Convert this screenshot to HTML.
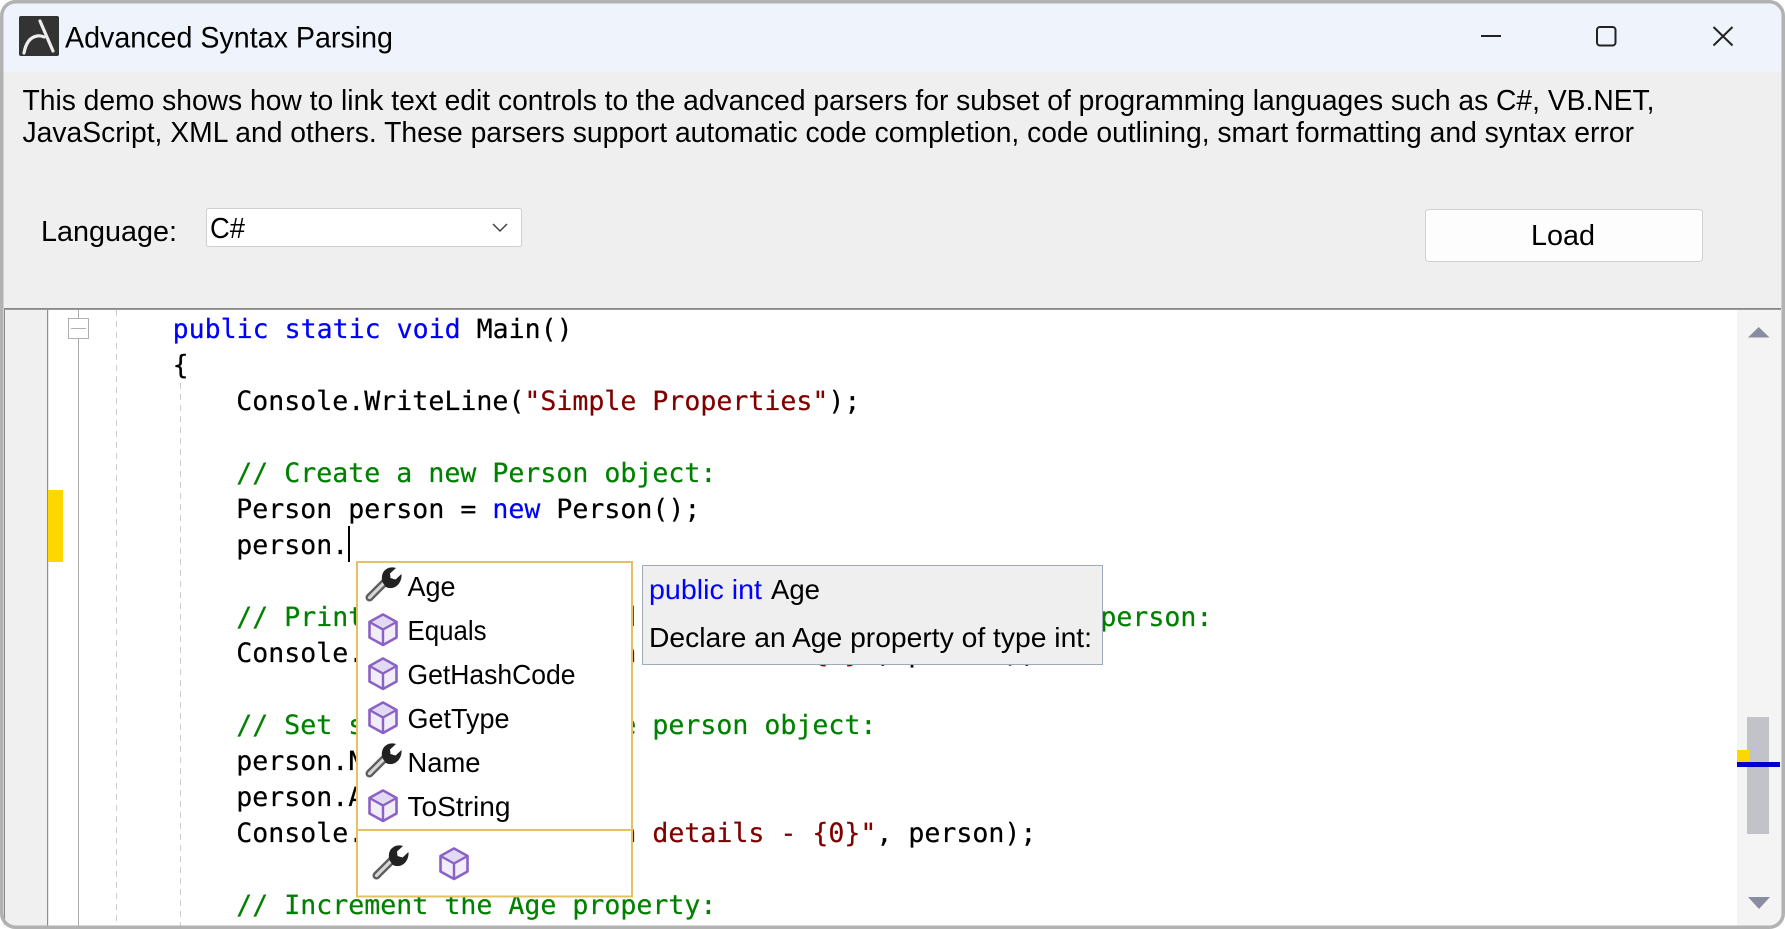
<!DOCTYPE html>
<html><head><meta charset="utf-8"><title>Advanced Syntax Parsing</title>
<style>
html,body{margin:0;padding:0;background:#fff;width:1785px;height:929px;overflow:hidden}
svg{display:block}
text{white-space:pre}
.s{font-family:"Liberation Sans",sans-serif;fill:#000}
.c{font-family:"DejaVu Sans Mono","Liberation Mono",monospace;font-size:26.58px;fill:#000;stroke:#000;stroke-width:.22px;text-rendering:geometricPrecision}
.k{fill:#0000ff;stroke:#0000ff}.g{fill:#008000;stroke:#008000}.m{fill:#800000;stroke:#800000}
</style></head><body>
<svg width="1785" height="929" viewBox="0 0 1785 929" xmlns="http://www.w3.org/2000/svg">
<defs>
<clipPath id="w"><rect x="0" y="0" width="1785" height="929" rx="15"/></clipPath>
<symbol id="cube" viewBox="0 0 30 33" width="30" height="33" overflow="visible">
<path d="M15 1.5L28.5 9V24.5L15 32L1.5 24.5V9Z" fill="#f1edf9" stroke="#8a62c5" stroke-width="2.6" stroke-linejoin="round"/>
<path d="M15 1.5L28.5 9L15 16.5L1.5 9Z" fill="#e1daf2" stroke="#8a62c5" stroke-width="2.4" stroke-linejoin="round"/>
<path d="M15 16.5V32" stroke="#8a62c5" stroke-width="2.4" fill="none"/>
</symbol>
<symbol id="wr" viewBox="0 0 37 35" width="37" height="35" overflow="visible">
<path d="M4.5 30.5L20 15" stroke="#5e5e5e" stroke-width="8" stroke-linecap="round"/>
<path d="M4.5 30.5L20 15" stroke="#d8d8d8" stroke-width="3.2" stroke-linecap="round"/>
<path d="M31 1C25-1 18 2 17 9C16.5 12 17 14 18 16L21 20C24 21.5 27 21.5 30 20C34 18 37 13 36.5 7L30.5 12.5L25.5 11L25 6.5Z" fill="#222"/>
</symbol>
</defs>
<g clip-path="url(#w)">
<rect width="1785" height="929" fill="#efefef"/>
<rect width="1785" height="72" fill="#eff3fb"/>
<rect x="19" y="16" width="40" height="40" rx="2" fill="#333"/>
<path d="M24 53C26 42 31 37 37 36C40 35.500 42 36 44 37" fill="none" stroke="#eee" stroke-width="3.200" stroke-linecap="round"/>
<path d="M40 21L53 51" fill="none" stroke="#eee" stroke-width="3.200" stroke-linecap="round"/>
<text class="s" x="65" y="47.500" font-size="30" textLength="328" lengthAdjust="spacingAndGlyphs">Advanced Syntax Parsing</text>
<path d="M1481 36H1501" stroke="#222" stroke-width="2"/>
<rect x="1597" y="27" width="18.500" height="18.500" rx="3" fill="none" stroke="#222" stroke-width="2"/>
<path d="M1713.500 27L1732.500 45.500M1732.500 27L1713.500 45.500" stroke="#222" stroke-width="2" fill="none"/>
<text class="s" x="22.500" y="110" font-size="28.300" textLength="1632" lengthAdjust="spacingAndGlyphs">This demo shows how to link text edit controls to the advanced parsers for subset of programming languages such as C#, VB.NET,</text>
<text class="s" x="22.500" y="142" font-size="28.300" textLength="1611.500" lengthAdjust="spacingAndGlyphs">JavaScript, XML and others. These parsers support automatic code completion, code outlining, smart formatting and syntax error</text>
<text class="s" x="41" y="241" font-size="28.300" textLength="136" lengthAdjust="spacingAndGlyphs">Language:</text>
<rect x="206.500" y="208.500" width="315" height="38" rx="2" fill="#fff" stroke="#cfcfcf"/>
<text class="s" x="210" y="238" font-size="28.300" textLength="35" lengthAdjust="spacingAndGlyphs">C#</text>
<path d="M493 224L500 231L507 224" fill="none" stroke="#444" stroke-width="1.500"/>
<rect x="1425.500" y="209.500" width="277" height="52" rx="3" fill="#fdfdfd" stroke="#d0d0d0"/>
<text class="s" x="1531" y="245" font-size="28.300" textLength="64" lengthAdjust="spacingAndGlyphs">Load</text>

<rect x="4" y="308" width="1777" height="1.800" fill="#888"/>
<rect x="4" y="310" width="1777" height="616" fill="#fff"/>
<rect x="4" y="310" width="1" height="616" fill="#888"/>
<rect x="5" y="310" width="42" height="616" fill="#f0f0f0"/>
<rect x="47" y="310" width="1.200" height="616" fill="#8e8e8e"/>
<rect x="48" y="490" width="15" height="72" fill="#ffd700"/>
<path d="M78.500 310V926" stroke="#aaa" stroke-width="1"/>
<rect x="68.500" y="318.500" width="20" height="20" fill="#fff" stroke="#b0b0b0"/>
<path d="M71 328.500H86" stroke="#b0b0b0"/>
<path d="M116.500 310V926" stroke="#ccc" stroke-width="1" stroke-dasharray="6 5"/>
<path d="M180.500 383V926" stroke="#ccc" stroke-width="1" stroke-dasharray="6 5"/>

<text class="c" x="172.600" y="338"><tspan class="k">public static void</tspan> Main()</text>
<text class="c" x="172.600" y="374">{</text>
<text class="c" x="236.300" y="410">Console.WriteLine(<tspan class="m">"Simple Properties"</tspan>);</text>
<text class="c g" x="236.300" y="482">// Create a new Person object:</text>
<text class="c" x="236.300" y="518">Person person = <tspan class="k">new</tspan> Person();</text>
<text class="c" x="236.300" y="554">person.</text>
<rect x="348" y="526" width="2" height="36" fill="#000"/>
<text class="c g" x="236.300" y="626">// Print out the name and the age associated with the person:</text>
<text class="c" x="236.300" y="662">Console.WriteLine(<tspan class="m">"Person details - {0}"</tspan>, person);</text>
<text class="c g" x="236.300" y="734">// Set some values on the person object:</text>
<text class="c" x="236.300" y="770">person.Name = <tspan class="m">"Joe"</tspan>;</text>
<text class="c" x="236.300" y="806">person.Age = 99;</text>
<text class="c" x="236.300" y="842">Console.WriteLine(<tspan class="m">"Person details - {0}"</tspan>, person);</text>
<text class="c g" x="236.300" y="914">// Increment the Age property:</text>

<rect x="357" y="562" width="275" height="334.500" fill="#fff" stroke="#e3c164" stroke-width="2"/>
<path d="M357 830H632" stroke="#e3c164" stroke-width="2"/>
<use href="#wr" x="365" y="567"/>
<use href="#cube" x="368" y="613"/>
<use href="#cube" x="368" y="657"/>
<use href="#cube" x="368" y="701"/>
<use href="#wr" x="365" y="743"/>
<use href="#cube" x="368" y="789"/>
<use href="#wr" x="372" y="845"/>
<use href="#cube" x="439" y="847"/>
<text class="s" x="407.500" y="596" font-size="28" textLength="48" lengthAdjust="spacingAndGlyphs">Age</text>
<text class="s" x="407.500" y="640" font-size="28" textLength="79" lengthAdjust="spacingAndGlyphs">Equals</text>
<text class="s" x="407.500" y="684" font-size="28" textLength="168" lengthAdjust="spacingAndGlyphs">GetHashCode</text>
<text class="s" x="407.500" y="728" font-size="28" textLength="102" lengthAdjust="spacingAndGlyphs">GetType</text>
<text class="s" x="407.500" y="772" font-size="28" textLength="73" lengthAdjust="spacingAndGlyphs">Name</text>
<text class="s" x="407.500" y="816" font-size="28" textLength="103" lengthAdjust="spacingAndGlyphs">ToString</text>

<rect x="642.500" y="565.500" width="460" height="99" fill="#efefef" stroke="#a0a8bc"/>
<text class="s" x="649" y="599" font-size="28" textLength="113" lengthAdjust="spacingAndGlyphs" style="fill:#0000ff">public int</text>
<text class="s" x="771" y="599" font-size="28" textLength="49" lengthAdjust="spacingAndGlyphs">Age</text>
<text class="s" x="649" y="647" font-size="28" textLength="443" lengthAdjust="spacingAndGlyphs">Declare an Age property of type int:</text>

<rect x="1737" y="310" width="44" height="616" fill="#f4f4f4"/>
<path d="M1748 337.500L1758.700 327L1769.500 337.500Z" fill="#8a8ca0"/>
<rect x="1747" y="717" width="22" height="117" fill="#c2c3c9"/>
<rect x="1737" y="750" width="13" height="17" fill="#ffd700"/>
<rect x="1737" y="762" width="43" height="5" fill="#0000cc"/>
<path d="M1748 897L1770 897L1759 909Z" fill="#8a8ca0"/>
</g>
<rect x="1.750" y="1.750" width="1781.500" height="925.500" rx="14" fill="none" stroke="#b2b2b2" stroke-width="3.500"/>
</svg>
</body></html>
